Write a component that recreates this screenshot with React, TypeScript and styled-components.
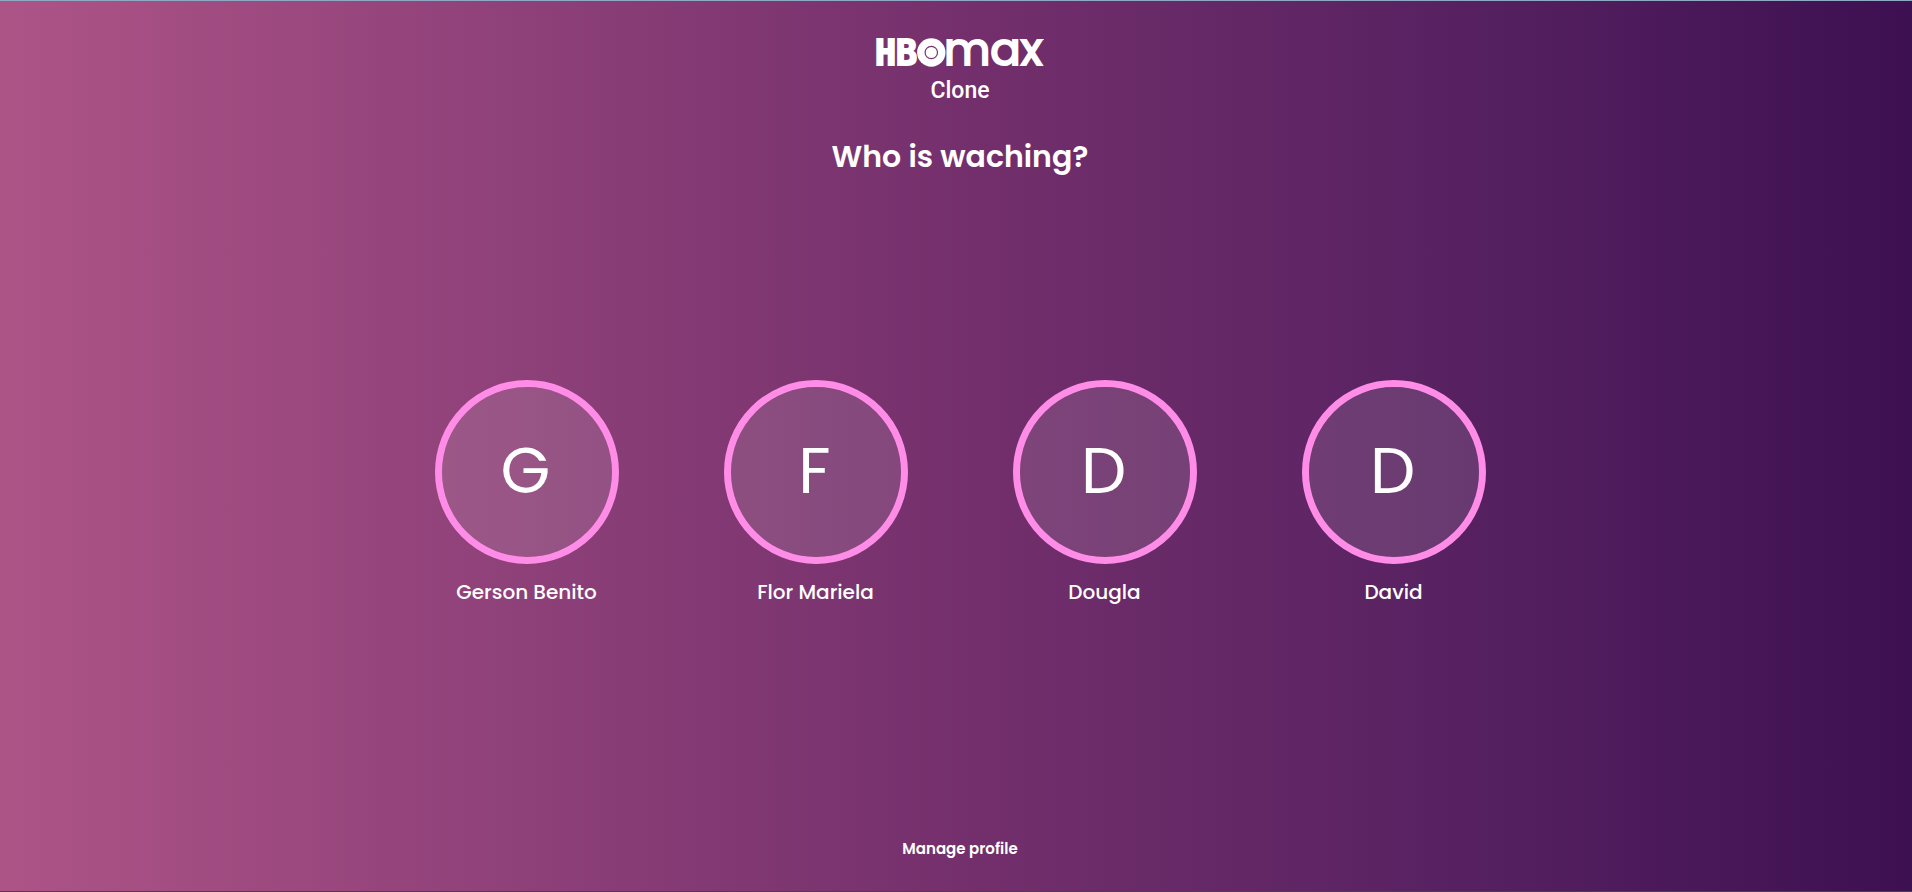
import React from "react";
import styled, { createGlobalStyle } from "styled-components";

const GlobalStyle = createGlobalStyle`
  *, *::before, *::after { box-sizing: border-box; }
  body {
    margin: 0;
    color: #fff;
    font-family: Poppins, Lato, "Open Sans", sans-serif;
  }
`;

const Page = styled.main`
  min-height: 100vh;
  padding: 33px 24px 30px 32px;
  display: flex;
  flex-direction: column;
  align-items: center;
  justify-content: space-between;
  border-top: 1px solid #8fa9c4;
  border-bottom: 1px solid #45424f;
  background: linear-gradient(90deg, #ad5487 0%, #732f6c 51%, #552060 78%, #3d1051 100%);
  background-origin: border-box;
`;

const Header = styled.header`
  display: flex;
  flex-direction: column;
  align-items: center;
`;

const Logo = styled.svg`
  display: block;
  width: 176px;
  height: 36px;
  overflow: visible;
  fill: #fff;
`;

const LogoHeavy = styled.text`
  font-family: "DejaVu Sans Mono", monospace;
  font-size: 35px;
  font-weight: 700;
  stroke: #fff;
  stroke-width: 2px;
`;

const LogoLight = styled.text`
  font-family: Poppins, Lato, sans-serif;
  font-size: 45px;
  font-weight: 400;
  stroke: #fff;
  stroke-width: 2px;
`;

const Tagline = styled.p`
  margin: 7px 0 0;
  font-family: Roboto, sans-serif;
  font-size: 23px;
  font-weight: 500;
  line-height: 28px;
`;

const Title = styled.h1`
  margin: 28px 0 0;
  font-size: 30px;
  font-weight: 600;
  line-height: 48px;
`;

const Profiles = styled.ul`
  display: flex;
  flex-wrap: wrap;
  justify-content: center;
  gap: 105px;
  margin: 0 0 32px;
  padding: 0;
  list-style: none;
`;

const ProfileButton = styled.button`
  display: flex;
  flex-direction: column;
  align-items: center;
  gap: 13px;
  padding: 0;
  border: 0;
  background: none;
  color: inherit;
  font: inherit;
  cursor: pointer;
`;

const Avatar = styled.span`
  display: grid;
  place-items: center;
  width: 184px;
  height: 184px;
  padding: 0 2px 2px 0;
  border: 7px solid #ff8ce6;
  border-radius: 50%;
  background: rgba(210, 210, 215, 0.14);
  background-clip: padding-box;
  font-size: 64px;
  line-height: 96px;
`;

const Name = styled.span`
  font-size: 20px;
  font-weight: 500;
  line-height: 30px;
`;

const ManageButton = styled.button`
  padding: 0;
  border: 0;
  background: none;
  color: inherit;
  font-family: inherit;
  font-size: 15px;
  font-weight: 600;
  line-height: 24px;
  cursor: pointer;
`;

const profiles = ["Gerson Benito", "Flor Mariela", "Dougla", "David"];

function BrandLogo() {
  return (
    <Logo viewBox="0 0 176 36" role="img" aria-label="HBO Max">
      <LogoHeavy x="3" y="31">HB</LogoHeavy>
      <circle cx="59.3" cy="18.5" r="14.2" />
      <circle cx="59.3" cy="18.5" r="6.2" fill="none" stroke="#783370" strokeWidth="1.2" />
      <LogoLight x="72" y="31">max</LogoLight>
      <rect x="169" y="5" width="3" height="1" opacity="0.6" />
    </Logo>
  );
}

export default function App() {
  return (
    <>
      <GlobalStyle />
      <Page>
        <Header>
          <BrandLogo />
          <Tagline>Clone</Tagline>
          <Title>Who is waching?</Title>
        </Header>
        <Profiles>
          {profiles.map((name) => (
            <li key={name}>
              <ProfileButton type="button">
                <Avatar aria-hidden="true">{name[0]}</Avatar>
                <Name>{name}</Name>
              </ProfileButton>
            </li>
          ))}
        </Profiles>
        <ManageButton type="button">Manage profile</ManageButton>
      </Page>
    </>
  );
}
